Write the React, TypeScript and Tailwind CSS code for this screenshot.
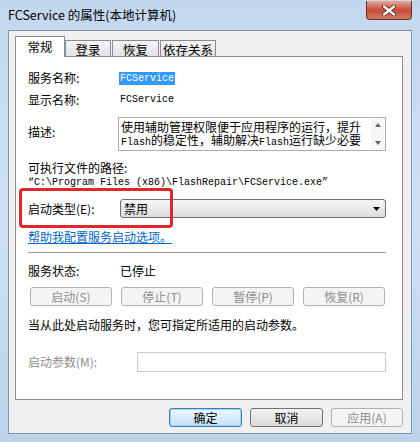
import React from 'react';

const cjk = "font-['Noto_Sans_CJK_SC',sans-serif]";
const mono = "font-['Liberation_Mono','Noto_Sans_CJK_SC',monospace] text-[10px]";

const Tab = ({ label, active, className = '' }: { label: string; active?: boolean; className?: string }) =>
  active ? (
    <div
      className={`relative z-10 -mb-px flex h-[21px] w-[50px] items-center justify-center border border-b-0 border-[#898c95] bg-white text-[12.5px] ${className}`}
    >
      {label}
    </div>
  ) : (
    <div
      className={`flex h-[16px] items-center justify-center border border-b-0 border-[#898c95] bg-gradient-to-b from-[#f4f4f4] to-[#e3e3e3] pt-[2px] text-[12.5px] ${className}`}
    >
      {label}
    </div>
  );

const DisabledButton = ({ label, className = '' }: { label: string; className?: string }) => (
  <div
    className={`flex h-[19px] items-center justify-center rounded-[3px] border border-[#adb2b5] bg-[#f4f4f4] text-[12px] text-[#8d8d8d] ${className}`}
  >
    {label}
  </div>
);

function Row({ label, children, gray }: { label: string; children?: React.ReactNode; gray?: boolean }) {
  return (
    <div className="flex items-center">
      <div className={`w-[92px] shrink-0 ${gray ? 'text-[#8d8d8d]' : ''}`}>{label}</div>
      {children}
    </div>
  );
}

export default function App() {
  return (
    <div className={`${cjk} flex h-[442px] w-[420px] flex-col overflow-hidden bg-gradient-to-b from-[#c3d8ee] via-[#cfe0f2] to-[#bcd3eb] text-[12px] leading-[16px] text-black`}>
      {/* Title bar */}
      <div className="relative flex h-[30px] shrink-0 items-center pl-[8px]">
        <span className="text-[12.5px] text-black">FCService 的属性(本地计算机)</span>
        <div className="absolute right-[8px] top-[1px] flex h-[19px] w-[46px] items-center justify-center rounded-b-[4px] border border-t-0 border-[#6b2b22] bg-gradient-to-b from-[#e3a99b] via-[#c54a36] to-[#d27a60]">
          <svg width="14" height="11" viewBox="0 0 14 11">
            <path d="M2 1.5 L12 9.5 M12 1.5 L2 9.5" stroke="#5a1d14" strokeWidth="4" strokeLinecap="round" />
            <path d="M2 1.5 L12 9.5 M12 1.5 L2 9.5" stroke="#ffffff" strokeWidth="2.4" strokeLinecap="round" />
          </svg>
        </div>
      </div>

      {/* Body with frame */}
      <div className="flex flex-1 px-[8px] pb-[8px]">
        <div className="flex flex-1 flex-col border border-[#7f93ad] bg-[#f0f0f0] pl-[6px] pr-[8px] pt-[5px]">
          {/* Tabs */}
          <div className="flex items-end">
            <Tab label="常规" active />
            <Tab label="登录" className="w-[46px]" />
            <Tab label="恢复" className="ml-px w-[47px]" />
            <Tab label="依存关系" className="ml-px w-[56px]" />
          </div>

          {/* Panel */}
          <div className="relative flex h-[344px] flex-col border border-[#898c95] bg-white pl-[12px] pr-[16px] pt-[13px]">
            <Row label="服务名称:">
              <span className={`${mono} -ml-px bg-[#3399ff] px-px leading-[13px] text-white`}>FCService</span>
            </Row>
            <div className="mt-[6px]">
              <Row label="显示名称:">
                <span className={mono}>FCService</span>
              </Row>
            </div>

            <div className="mt-[9px] flex items-start">
              <div className="mt-[7px] w-[90px] shrink-0">描述:</div>
              <div className="flex h-[34px] flex-1 border border-[#abadb3] bg-white">
                <div className="flex-1 pl-[2px] pt-[2px] text-[12px] leading-[13px]">
                  <div className="whitespace-nowrap">使用辅助管理权限便于应用程序的运行，提升</div>
                  <div className="whitespace-nowrap">
                    <span className={mono}>Flash</span>的稳定性，辅助解决<span className={mono}>Flash</span>运行缺少必要
                  </div>
                </div>
                <div className="flex w-[14px] flex-col items-center justify-between bg-[#f7f7f7] py-[5px]">
                  <svg width="6" height="4" viewBox="0 0 6 4"><path d="M0 4 L3 0 L6 4 Z" fill="#606060" /></svg>
                  <svg width="6" height="4" viewBox="0 0 6 4"><path d="M0 0 L6 0 L3 4 Z" fill="#606060" /></svg>
                </div>
              </div>
            </div>

            <div className="mt-[9px]">可执行文件的路径:</div>
            <div className={`${mono} h-[14px] leading-[14px]`}>“C:\Program Files (x86)\FlashRepair\FCService.exe”</div>

            <div className="mt-[9px]">
              <Row label="启动类型(E):">
                <div className="flex h-[19px] flex-1 items-center justify-between rounded-[3px] border border-[#707070] bg-gradient-to-b from-[#f6f6f6] to-[#dddddd] pl-[3px] pr-[5px]">
                  <span>禁用</span>
                  <svg width="7" height="4" viewBox="0 0 7 4"><path d="M0 0 L7 0 L3.5 4 Z" fill="#000" /></svg>
                </div>
              </Row>
            </div>

            <div className="mt-[11px] text-[#0066cc] underline">帮助我配置服务启动选项。</div>

            <div className="mt-[7px] h-px bg-[#a0a0a0]" />

            <div className="mt-[10px]">
              <Row label="服务状态:">
                <span>已停止</span>
              </Row>
            </div>

            <div className="mt-[8px] flex gap-[9px] pl-[2px]">
              <DisabledButton label="启动(S)" className="w-[82px]" />
              <DisabledButton label="停止(T)" className="w-[82px]" />
              <DisabledButton label="暂停(P)" className="w-[82px]" />
              <DisabledButton label="恢复(R)" className="w-[82px]" />
            </div>

            <div className="mt-[11px]">当从此处启动服务时，您可指定所适用的启动参数。</div>

            <div className="mt-[19px] flex items-center">
              <div className="w-[109px] shrink-0 text-[#8d8d8d]">启动参数(M):</div>
              <div className="h-[20px] flex-1 border border-[#c9cacb] bg-white" />
            </div>

            {/* annotation */}
            <div className="absolute left-[3px] top-[131px] h-[40px] w-[154px] rounded-[4px] border-[3px] border-[#e3262b]" />
          </div>

          {/* Dialog buttons */}
          <div className="mt-[8px] flex justify-end gap-[8px] pr-0">
            <div className="flex h-[19px] w-[73px] items-center justify-center rounded-[3px] border border-[#3c7fb1] bg-gradient-to-b from-[#eaf6fd] to-[#c4e3f7] shadow-[inset_0_0_0_1px_#9bd6f5]">确定</div>
            <div className="flex h-[19px] w-[73px] items-center justify-center rounded-[3px] border border-[#707070] bg-gradient-to-b from-[#f3f3f3] to-[#dadada]">取消</div>
            <div className="flex h-[19px] w-[72px] items-center justify-center rounded-[3px] border border-[#adb2b5] bg-[#f4f4f4] text-[#8d8d8d]">应用(A)</div>
          </div>
        </div>
      </div>
    </div>
  );
}
